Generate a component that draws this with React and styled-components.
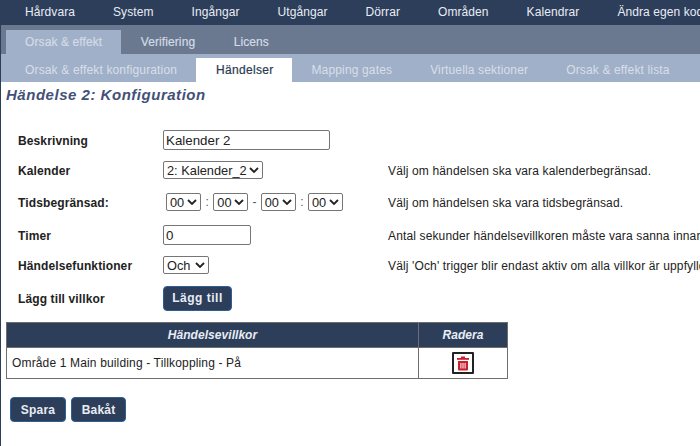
import React from "react";
import styled, { createGlobalStyle } from "styled-components";

const chevron = "data:image/svg+xml,%3Csvg xmlns='http://www.w3.org/2000/svg' width='10' height='6' viewBox='0 0 10 6'%3E%3Cpath d='M1 1l4 4 4-4' fill='none' stroke='%23222' stroke-width='1.8'/%3E%3C/svg%3E";

const Global = createGlobalStyle`
  html, body { margin: 0; padding: 0; background: #fff; }
  body { font-family: "Liberation Sans", Arial, sans-serif; font-size: 12px; color: #222; width: 700px; height: 446px; overflow: hidden; }
`;
const Page = styled.div`
  width: 700px; height: 446px; overflow: hidden; position: relative;
  border-left: 1px solid #2d3e5b; box-sizing: border-box;
`;
const TopNav = styled.nav`
  display: flex; height: 25px; margin-left: -1px; background: #2d3e5b; padding-left: 6px; white-space: nowrap;
`;
const TopItem = styled.a`
  color: #e8edf3; font-size: 12px; letter-spacing: 0.08px; line-height: 25px; padding: 0 19px; flex: none;
`;
const SecondNav = styled.nav`
  display: flex; height: 29px; margin-left: -1px; background: #6a7890; padding: 5px 0 0 6px; box-sizing: border-box;
`;
const SecondItem = styled.a`
  height: 24px; line-height: 24px; padding: 0 ${p => p.$pad}px; font-size: 12px; font-weight: 400; letter-spacing: 0.1px;
  -webkit-text-stroke: 0.2px currentColor;
  color: #d3dbe6; background: ${p => p.$active ? "#a0b0c8" : "transparent"};
`;
const ThirdNav = styled.nav`
  display: flex; height: 28px; margin-left: -1px; background: #a0b0c8; padding: 4px 0 0 6px; box-sizing: border-box; white-space: nowrap;
`;
const ThirdItem = styled.a`
  height: 24px; line-height: 24px; padding: 0 19px 0 ${p => p.$active ? 20 : 19}px; font-size: 12px;
  letter-spacing: ${p => p.$active ? 0.3 : 0.15}px;
  color: ${p => p.$active ? "#2b3a52" : "#d8dfe9"};
  background: ${p => p.$active ? "#fff" : "transparent"};
  -webkit-text-stroke: ${p => p.$active ? "0.2px currentColor" : "0"};
`;
const Title = styled.h1`
  margin: 4px 0 0 5px; font-size: 15px; line-height: 18px; font-weight: bold; font-style: italic; color: #445078; letter-spacing: 0.52px;
`;
const Form = styled.div`
  display: grid; grid-template-columns: 145px 225px 1fr; margin: 20px 0 0 17px; align-items: center; white-space: nowrap;
  grid-template-rows: 32px 28px 36px 30px 30px 36px;
`;
const Label = styled.label`
  font-size: 12px; font-weight: bold; color: #222; letter-spacing: 0.12px; padding-top: 2px;
`;
const Help = styled.span`
  font-size: 12px; color: #222; letter-spacing: 0.14px; padding-top: 2px;
`;
const TextInput = styled.input`
  width: ${p => p.$w}px; height: 20px; box-sizing: border-box; border: 1px solid #767676; border-radius: 2px; padding: 0 2px;
  font: 13.33px "Liberation Sans", Arial, sans-serif; color: #222; display: block; background: #fff;
`;
const Select = styled.select`
  display: block; width: ${p => p.$w}px; height: 18px; box-sizing: border-box; border: 1px solid #767676; border-radius: 2px;
  appearance: none; background: #fff url("${chevron}") no-repeat right 3px center;
  font: 12.8px "Liberation Sans", Arial, sans-serif; color: #222; padding: 0 0 0 ${p => p.$pad}px;
`;
const TimeRow = styled.div`
  display: flex; align-items: center; padding-left: 3px; color: #555; font-size: 12px;
`;
const Sep = styled.span`
  width: 12.33px; text-align: center;
`;
const Button = styled.button`
  display: block; background: #2d3e5b; color: #e8edf3; border: 1px solid #2c5f96; border-radius: 4px; font: bold 12px "Liberation Sans", Arial, sans-serif;
  letter-spacing: ${p => p.$spacing}px; height: 25px; width: ${p => p.$w}px; padding: 0; box-sizing: border-box;
`;
const Table = styled.table`
  border-collapse: collapse; margin: 6px 0 0 5px; width: 502px; table-layout: fixed;
`;
const Th = styled.th`
  background: #2d3e5b; color: #e8edf3; font-size: 12px; font-style: italic; font-weight: bold; letter-spacing: 0.05px; height: 24px; padding: 0;
  border: 1px solid #6e6e6e; width: ${p => p.$w ? p.$w + "px" : "auto"};
`;
const Td = styled.td`
  border: 1px solid #6e6e6e; height: 30px; padding: 0 5px; font-size: 12px; color: #222; text-align: ${p => p.$center ? "center" : "left"}; letter-spacing: 0.15px;
`;
const IconButton = styled.span`
  display: inline-flex; align-items: center; justify-content: center; width: 22px; height: 22px; box-sizing: border-box; border: 2px solid #222; border-radius: 1px; vertical-align: middle; background: #fff;
`;
const Actions = styled.div`
  display: flex; gap: 5px; margin: 18px 0 0 9px;
`;

const tops = ["Hårdvara", "System", "Ingångar", "Utgångar", "Dörrar", "Områden", "Kalendrar", "Ändra egen kod"];
const thirds = ["Orsak & effekt konfiguration", "Händelser", "Mapping gates", "Virtuella sektioner", "Orsak & effekt lista"];
const TimeSelect = () => <Select $w={35} $pad={3} defaultValue="00"><option>00</option></Select>;

export default function App() {
  return (
    <Page>
      <Global />
      <TopNav>{tops.map(t => <TopItem key={t}>{t}</TopItem>)}</TopNav>
      <SecondNav>
        <SecondItem $active $pad={19}>Orsak &amp; effekt</SecondItem>
        <SecondItem $pad={19.5}>Verifiering</SecondItem>
        <SecondItem $pad={19}>Licens</SecondItem>
      </SecondNav>
      <ThirdNav>{thirds.map(t => <ThirdItem key={t} $active={t === "Händelser"}>{t}</ThirdItem>)}</ThirdNav>
      <Title>Händelse 2: Konfiguration</Title>
      <Form>
        <Label>Beskrivning</Label>
        <TextInput $w={167} defaultValue="Kalender 2" />
        <span />
        <Label>Kalender</Label>
        <div><Select $w={100} $pad={3} defaultValue="2"><option value="2">2: Kalender_2</option></Select></div>
        <Help>Välj om händelsen ska vara kalenderbegränsad.</Help>
        <Label>Tidsbegränsad:</Label>
        <TimeRow><TimeSelect /><Sep>:</Sep><TimeSelect /><Sep>-</Sep><TimeSelect /><Sep>:</Sep><TimeSelect /></TimeRow>
        <Help>Välj om händelsen ska vara tidsbegränsad.</Help>
        <Label>Timer</Label>
        <TextInput $w={88} defaultValue="0" />
        <Help>Antal sekunder händelsevillkoren måste vara sanna innan händelsen aktiveras.</Help>
        <Label>Händelsefunktioner</Label>
        <div><Select $w={46} $pad={3} defaultValue="Och"><option>Och</option></Select></div>
        <Help>Välj 'Och' trigger blir endast aktiv om alla villkor är uppfyllda.</Help>
        <Label>Lägg till villkor</Label>
        <div><Button $w={69} $spacing={0.5}>Lägg till</Button></div>
        <span />
      </Form>
      <Table>
        <thead><tr><Th>Händelsevillkor</Th><Th $w={88}>Radera</Th></tr></thead>
        <tbody><tr>
          <Td>Område 1 Main building - Tillkoppling - På</Td>
          <Td $center>
            <IconButton>
              <svg width="14" height="15" viewBox="0 0 14 15" fill="#c8202c">
                <rect x="1" y="2" width="12" height="1.8" />
                <rect x="5" y="0.5" width="4" height="2" />
                <path d="M2 5h10v8.5a1 1 0 0 1-1 1H3a1 1 0 0 1-1-1z" />
                <rect x="4.4" y="7" width="1" height="5.5" fill="#fff" />
                <rect x="6.5" y="7" width="1" height="5.5" fill="#fff" />
                <rect x="8.6" y="7" width="1" height="5.5" fill="#fff" />
              </svg>
            </IconButton>
          </Td>
        </tr></tbody>
      </Table>
      <Actions>
        <Button $w={56} $spacing={0.2}>Spara</Button>
        <Button $w={55} $spacing={0.2}>Bakåt</Button>
      </Actions>
    </Page>
  );
}
